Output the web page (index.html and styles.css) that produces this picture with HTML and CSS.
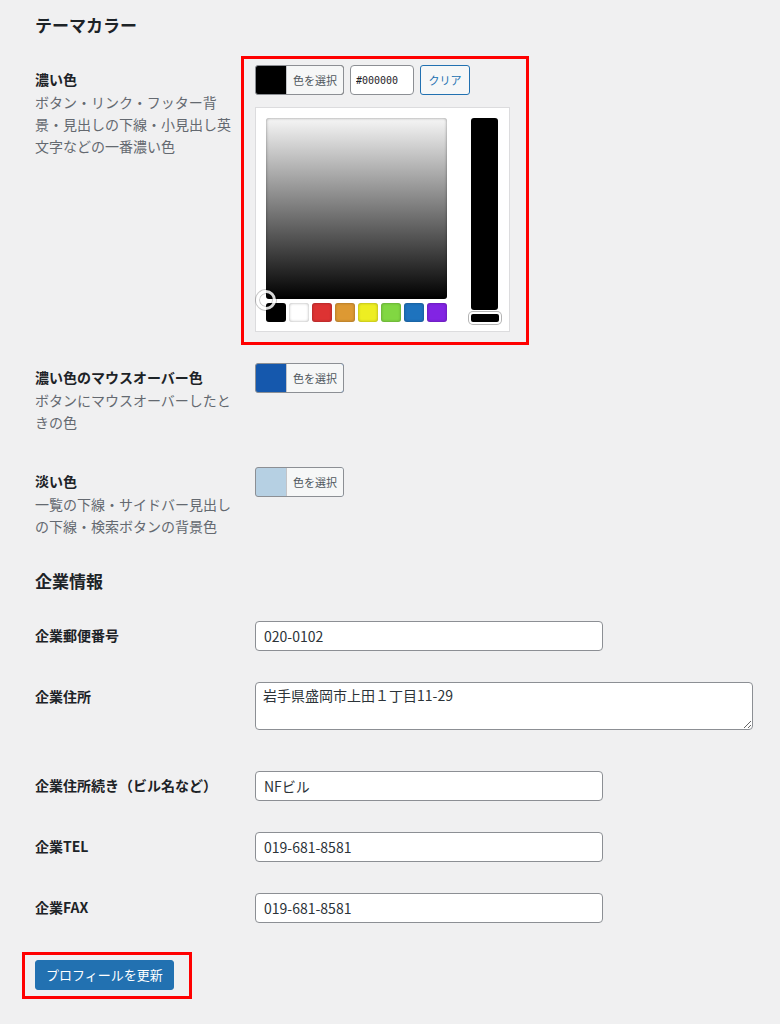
FILE: index.html
```html
<!DOCTYPE html>
<html lang="ja">
<head>
    <meta charset="UTF-8">
    <meta name="viewport" content="width=device-width, initial-scale=1.0">
    <title>プロフィール</title>
    <link rel="stylesheet" href="styles.css">
</head>
<body>
<div class="wrap">
    <h2>テーマカラー</h2>
    <div class="form-table">
        <div class="row">
            <div class="th">
                <label class="label">濃い色</label>
                <p class="description">ボタン・リンク・フッター背景・見出しの下線・小見出し英文字などの一番濃い色</p>
            </div>
            <div class="td">
                <div class="picker mark">
                    <div class="picker-bar">
                        <button type="button" class="color-result" style="background-color: #000000;"><span class="color-result-text">色を選択</span></button>
                        <input type="text" class="color-hex" value="#000000">
                        <button type="button" class="button-small">クリア</button>
                    </div>
                    <div class="picker-holder">
                        <div class="picker-main">
                            <div class="picker-square">
                                <span class="square-handle"></span>
                            </div>
                            <div class="palette">
                                <span class="swatch" style="background-color: #000000;"></span>
                                <span class="swatch" style="background-color: #ffffff;"></span>
                                <span class="swatch" style="background-color: #dd3333;"></span>
                                <span class="swatch" style="background-color: #dd9933;"></span>
                                <span class="swatch" style="background-color: #eeee22;"></span>
                                <span class="swatch" style="background-color: #81d742;"></span>
                                <span class="swatch" style="background-color: #1e73be;"></span>
                                <span class="swatch" style="background-color: #8224e3;"></span>
                            </div>
                        </div>
                        <div class="picker-slider">
                            <div class="slider-bar"></div>
                            <span class="slider-handle"></span>
                        </div>
                    </div>
                </div>
            </div>
        </div>

        <div class="row">
            <div class="th">
                <label class="label">濃い色のマウスオーバー色</label>
                <p class="description">ボタンにマウスオーバーしたときの色</p>
            </div>
            <div class="td">
                <button type="button" class="color-result" style="background-color: #1558ad;"><span class="color-result-text">色を選択</span></button>
            </div>
        </div>

        <div class="row">
            <div class="th">
                <label class="label">淡い色</label>
                <p class="description">一覧の下線・サイドバー見出しの下線・検索ボタンの背景色</p>
            </div>
            <div class="td">
                <button type="button" class="color-result" style="background-color: #b6d0e3;"><span class="color-result-text">色を選択</span></button>
            </div>
        </div>
    </div>

    <h2>企業情報</h2>
    <div class="form-table">
        <div class="row">
            <div class="th"><label class="label" for="zip">企業郵便番号</label></div>
            <div class="td"><input type="text" id="zip" class="regular-text" value="020-0102"></div>
        </div>
        <div class="row">
            <div class="th"><label class="label" for="address">企業住所</label></div>
            <div class="td"><textarea id="address" class="large-text">岩手県盛岡市上田１丁目11-29</textarea></div>
        </div>
        <div class="row">
            <div class="th"><label class="label" for="address2">企業住所続き（ビル名など）</label></div>
            <div class="td"><input type="text" id="address2" class="regular-text" value="NFビル"></div>
        </div>
        <div class="row">
            <div class="th"><label class="label" for="tel">企業TEL</label></div>
            <div class="td"><input type="text" id="tel" class="regular-text" value="019-681-8581"></div>
        </div>
        <div class="row">
            <div class="th"><label class="label" for="fax">企業FAX</label></div>
            <div class="td"><input type="text" id="fax" class="regular-text" value="019-681-8581"></div>
        </div>
    </div>

    <p class="submit">
        <span class="mark mark-submit"><button type="submit" class="button-primary">プロフィールを更新</button></span>
    </p>
</div>
</body>
</html>
```

FILE: styles.css
```css
:root {
    --wp-bg: #f0f0f1;
    --wp-text: #1d2327;
    --wp-desc: #646970;
    --wp-border: #8c8f94;
    --wp-blue: #2271b1;
    --wp-button-bg: #f6f7f7;
    --mark-red: #ff0000;
}

* {
    box-sizing: border-box;
}

body {
    margin: 0;
    background-color: var(--wp-bg);
    font-family: "Noto Sans CJK JP", "Noto Sans", sans-serif;
    font-size: 13px;
    color: #3c434a;
}

.wrap {
    padding: 0 0 30px 35px;
}

h2 {
    margin: 13px 0 13px;
    font-size: 17px;
    line-height: 24px;
    font-weight: 700;
    color: var(--wp-text);
}

.row {
    display: grid;
    grid-template-columns: 210px 1fr;
}

.th {
    padding: 18px 10px 19px 0;
}

.td {
    padding: 15px 10px 16px;
}

.label {
    display: block;
    font-size: 14px;
    line-height: 22px;
    font-weight: 700;
    color: var(--wp-text);
}

.description {
    margin: 1px 0 0;
    font-size: 14px;
    line-height: 22px;
    color: var(--wp-desc);
}

/* red annotation boxes */
.mark {
    position: relative;
}

.mark::after {
    content: '';
    position: absolute;
    top: -9px;
    left: -14px;
    right: -19px;
    bottom: -13px;
    border: 3px solid var(--mark-red);
    pointer-events: none;
}

.mark-submit {
    display: inline-block;
}

.mark-submit::after {
    top: -8px;
    left: -13px;
    right: -18px;
    bottom: -9px;
}

/* colour picker */
.picker {
    width: 255px;
}

.picker-bar {
    display: flex;
    align-items: stretch;
    height: 30px;
}

.color-result {
    display: inline-block;
    height: 30px;
    margin: 0;
    padding: 0 0 0 30px;
    border: 1px solid var(--wp-border);
    border-radius: 3px;
    font-family: inherit;
    cursor: pointer;
    vertical-align: top;
}

.color-result-text {
    display: block;
    height: 28px;
    padding: 0 6px;
    background-color: var(--wp-button-bg);
    border-left: 1px solid #c3c4c7;
    border-radius: 0 2px 2px 0;
    font-size: 11px;
    line-height: 28px;
    color: #50575e;
}

.color-hex {
    width: 64px;
    height: 30px;
    margin: 0 6px;
    padding: 0 5px;
    border: 1px solid var(--wp-border);
    border-radius: 4px;
    background: #fff;
    font-family: "DejaVu Sans Mono", monospace;
    font-size: 10px;
    color: var(--wp-text);
}

.button-small {
    width: 50px;
    height: 30px;
    padding: 0;
    border: 1px solid var(--wp-blue);
    border-radius: 3px;
    background-color: var(--wp-button-bg);
    font-family: inherit;
    font-size: 11px;
    color: var(--wp-blue);
    cursor: pointer;
}

.picker-holder {
    display: flex;
    margin-top: 12px;
    padding: 10px 11px 9px 10px;
    background: #fff;
    border: 1px solid #dcdcde;
}

.picker-main {
    width: 181px;
}

.picker-square {
    position: relative;
    height: 181px;
    border-radius: 3px;
    background: linear-gradient(to bottom, #f6f6f6, #000000);
    box-shadow: inset 0 0 3px rgba(0, 0, 0, 0.45);
}

.square-handle {
    position: absolute;
    left: -10px;
    top: 172px;
    width: 20px;
    height: 20px;
    border-radius: 50%;
    border: 3px solid rgba(255, 255, 255, 0.85);
    box-shadow: 0 0 0 1px rgba(0, 0, 0, 0.22), inset 0 0 0 1px rgba(0, 0, 0, 0.22);
}

.palette {
    display: flex;
    justify-content: space-between;
    margin-top: 4px;
}

.swatch {
    width: 20px;
    height: 19px;
    border-radius: 3px;
    box-shadow: inset 0 0 3px rgba(0, 0, 0, 0.35);
}

.picker-slider {
    position: relative;
    display: flex;
    flex-direction: column;
    width: 27px;
    margin-left: 24px;
}

.slider-bar {
    flex: 1;
    margin-bottom: 12px;
    background: #000;
    border-radius: 3px;
}

.slider-handle {
    position: absolute;
    left: -2px;
    right: -3px;
    bottom: -2px;
    height: 12px;
    background: #000;
    border: 2px solid #fff;
    border-radius: 4px;
    box-shadow: 0 0 0 1px #b4b4b4;
}

/* text fields */
.regular-text,
.large-text {
    border: 1px solid var(--wp-border);
    border-radius: 4px;
    background: #fff;
    font-family: inherit;
    font-size: 14px;
    color: #2c3338;
}

.regular-text {
    display: block;
    width: 348px;
    height: 30px;
    padding: 0 8px;
}

.large-text {
    display: block;
    width: 498px;
    height: 48px;
    margin-bottom: 10px;
    padding: 2px 7px;
    line-height: 20px;
    resize: vertical;
}

.submit {
    margin: 21px 0 0;
}

.button-primary {
    height: 30px;
    padding: 0 10px;
    background-color: var(--wp-blue);
    border: 1px solid var(--wp-blue);
    border-radius: 3px;
    font-family: inherit;
    font-size: 13px;
    line-height: 28px;
    color: #fff;
    cursor: pointer;
    vertical-align: top;
}
```
